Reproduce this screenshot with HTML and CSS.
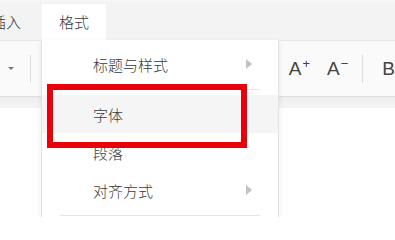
FILE: index.html
```html
<!DOCTYPE html>
<html lang="zh">
<head>
<meta charset="utf-8">
<link rel="stylesheet" href="styles.css">
</head>
<body>
<div class="app">
  <div class="menubar">
    <div class="menu-item">插入</div>
    <div class="menu-item tab">格式</div>
  </div>
  <div class="toolbar">
    <span class="caret"></span>
    <span class="sep"></span>
    <span class="hidden-tools"></span>
    <span class="tool">A<sup>+</sup></span>
    <span class="tool">A<sup>−</sup></span>
    <span class="sep sep2"></span>
    <span class="tool bold">B</span>
  </div>
  <div class="band"></div>
  <div class="doc"></div>

  <div class="dropdown">
    <div class="dd-item"><span>标题与样式</span><span class="arrow"></span></div>
    <div class="dd-sep"></div>
    <div class="dd-item active"><span>字体</span></div>
    <div class="dd-item"><span>段落</span></div>
    <div class="dd-item"><span>对齐方式</span><span class="arrow"></span></div>
    <div class="dd-sep"></div>
  </div>
  <div class="highlight-box"></div>
</div>
</body>
</html>
```
FILE: styles.css
```css
html, body {
  margin: 0;
  padding: 0;
}
body {
  width: 395px;
  height: 217px;
  overflow: hidden;
  background: #ffffff;
  font-family: "Noto Sans CJK SC", "Liberation Sans", sans-serif;
}
.app {
  position: relative;
  width: 395px;
  height: 217px;
  overflow: hidden;
  display: flex;
  flex-direction: column;
}
.menubar {
  height: 40px;
  flex: none;
  display: flex;
  align-items: flex-end;
  background: #f3f3f3;
  border-top: 2px solid #f7f7f7;
  box-sizing: border-box;
}
.menu-item {
  height: 36px;
  line-height: 35px;
  font-size: 15px;
  font-weight: 300;
  color: #3a3a3a;
  padding: 0 16px;
  margin-left: -25px;
}
.menu-item.tab {
  margin-left: 5px;
  width: 64px;
  padding: 0;
  text-align: center;
  background: #ffffff;
  box-sizing: border-box;
}
.toolbar {
  height: 57px;
  flex: none;
  box-sizing: border-box;
  border-top: 1px solid #e6e6e6;
  border-bottom: 1px solid #dedede;
  background: #fafafa;
  display: flex;
  align-items: center;
  font-family: "Liberation Sans", sans-serif;
}
.caret {
  width: 0;
  height: 0;
  margin-left: 8px;
  border-left: 3px solid transparent;
  border-right: 3px solid transparent;
  border-top: 3px solid #777;
}
.sep {
  width: 1px;
  height: 28px;
  background: #dcdcdc;
  margin-left: 16px;
}
.hidden-tools {
  width: 259px;
}
.tool {
  font-size: 19px;
  color: #444;
  line-height: 20px;
  margin-right: 17px;
}
.tool sup {
  font-size: 13px;
  vertical-align: 7px;
  line-height: 0;
  margin-left: 1px;
}
.sep2 {
  margin-left: -3px;
  margin-right: 19px;
}
.tool.bold {
  margin-right: 0;
}
.band {
  height: 11px;
  flex: none;
  background: linear-gradient(#ededed, #f5f5f5);
}
.doc {
  flex: 1;
  background: #ffffff;
}
.dropdown {
  position: absolute;
  left: 41px;
  top: 40px;
  width: 238px;
  height: 190px;
  box-sizing: border-box;
  background: #ffffff;
  border-left: 1px solid #e2e2e2;
  border-right: 1px solid #e2e2e2;
  box-shadow: 0 2px 6px rgba(0, 0, 0, 0.08);
  padding-top: 5px;
}
.dd-item {
  height: 38px;
  display: flex;
  align-items: center;
  justify-content: space-between;
  padding-left: 51px;
  padding-right: 26px;
  font-size: 15px;
  font-weight: 300;
  color: #3a3a3a;
}
.dd-item.active {
  background: #f5f5f5;
}
.arrow {
  width: 0;
  height: 0;
  border-top: 5px solid transparent;
  border-bottom: 5px solid transparent;
  border-left: 6px solid #c2c2c2;
}
.dd-sep {
  height: 1px;
  background: #e6e6e6;
  margin: 6px 18px 5px 18px;
}
.highlight-box {
  position: absolute;
  left: 47px;
  top: 84px;
  width: 200px;
  height: 64px;
  box-sizing: border-box;
  border: 6px solid #e8000b;
}
```
